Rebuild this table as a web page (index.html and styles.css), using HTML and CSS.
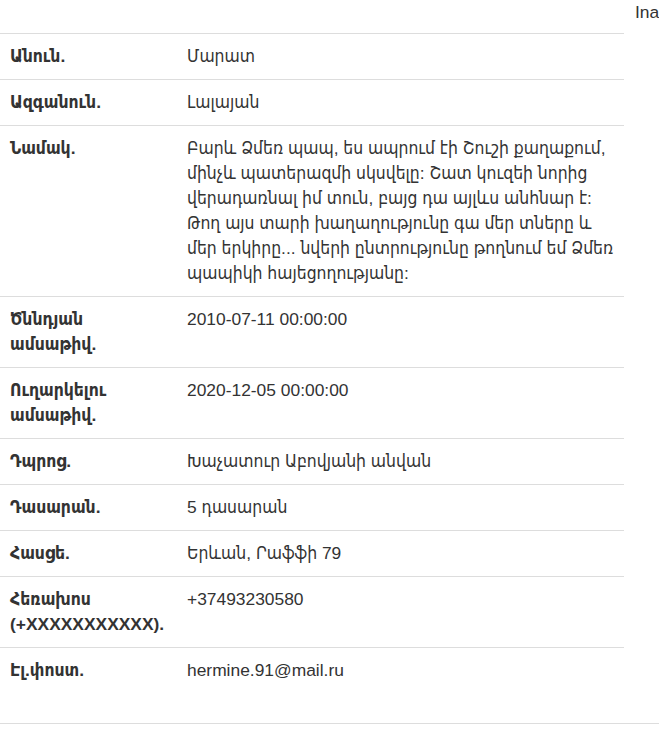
FILE: index.html
```html
<!DOCTYPE html>
<html lang="hy">
<head>
<meta charset="utf-8">
<title>Նամակ</title>
<link rel="stylesheet" href="styles.css">
</head>
<body>
<div class="page">
  <div class="main">
    <table class="details">
      <tbody>
        <tr><th>Անուն.</th><td>Մարատ</td></tr>
        <tr><th>Ազգանուն.</th><td>Լալայան</td></tr>
        <tr><th>Նամակ.</th><td>Բարև Ձմեռ պապ, ես ապրում էի Շուշի քաղաքում, մինչև պատերազմի սկսվելը: Շատ կուզեի նորից վերադառնալ իմ տուն, բայց դա այլևս անհնար է: Թող այս տարի խաղաղությունը գա մեր տները և մեր երկիրը... նվերի ընտրությունը թողնում եմ Ձմեռ պապիկի հայեցողությանը:</td></tr>
        <tr><th>Ծննդյան ամսաթիվ.</th><td>2010-07-11 00:00:00</td></tr>
        <tr><th>Ուղարկելու ամսաթիվ.</th><td>2020-12-05 00:00:00</td></tr>
        <tr><th>Դպրոց.</th><td>Խաչատուր Աբովյանի անվան</td></tr>
        <tr><th>Դասարան.</th><td>5 դասարան</td></tr>
        <tr><th>Հասցե.</th><td>Երևան, Րաֆֆի 79</td></tr>
        <tr><th>Հեռախոս (+XXXXXXXXXXX).</th><td>+37493230580</td></tr>
        <tr><th>Էլ.փոստ.</th><td>hermine.91@mail.ru</td></tr>
      </tbody>
    </table>
  </div>
  <div class="side">Ina</div>
</div>
<div class="rule"></div>
</body>
</html>
```

FILE: styles.css
```css
html, body {
  margin: 0;
  padding: 0;
  background: #fff;
}
body {
  font-family: "Liberation Sans", "DejaVu Sans Condensed", "DejaVu Sans", sans-serif;
  font-size: 17.4px;
  line-height: 25px;
  color: #333;
  overflow: hidden;
}
.page {
  display: flex;
  gap: 11px;
}
.main {
  width: 624px;
  flex: none;
  padding-top: 33px;
}
.side {
  white-space: nowrap;
}
.details {
  width: 100%;
  border-collapse: collapse;
  border-spacing: 0;
}
.details th,
.details td {
  padding: 10px;
  border-top: 1px solid #ddd;
  vertical-align: top;
  text-align: left;
}
.details th {
  width: 157px;
  font-weight: bold;
}
.rule {
  margin-top: 30px;
  border-top: 1px solid #ddd;
}
```
